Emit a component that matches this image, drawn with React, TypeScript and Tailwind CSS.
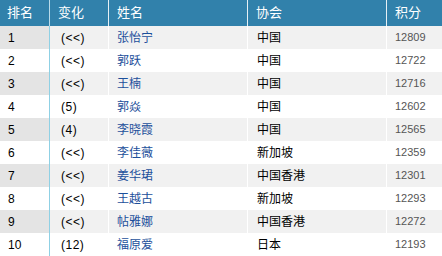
const rows = [
  { rank: "1", change: "(<<)", name: "张怡宁", assoc: "中国", score: "12809" },
  { rank: "2", change: "(<<)", name: "郭跃", assoc: "中国", score: "12722" },
  { rank: "3", change: "(<<)", name: "王楠", assoc: "中国", score: "12716" },
  { rank: "4", change: "(5)", name: "郭焱", assoc: "中国", score: "12602" },
  { rank: "5", change: "(4)", name: "李晓霞", assoc: "中国", score: "12565" },
  { rank: "6", change: "(<<)", name: "李佳薇", assoc: "新加坡", score: "12359" },
  { rank: "7", change: "(<<)", name: "姜华珺", assoc: "中国香港", score: "12301" },
  { rank: "8", change: "(<<)", name: "王越古", assoc: "新加坡", score: "12293" },
  { rank: "9", change: "(<<)", name: "帖雅娜", assoc: "中国香港", score: "12272" },
  { rank: "10", change: "(12)", name: "福原爱", assoc: "日本", score: "12193" },
];

const cjk = "font-['Liberation_Sans','Noto_Sans_CJK_SC',sans-serif]";

export default function App() {
  return (
    <div className={`w-[442px] h-[256px] bg-white ${cjk}`}>
      {/* header */}
      <div className="flex h-[26px] bg-[#3181ab] text-white text-[13px] items-center">
        <div className="w-[50px] h-full flex items-center pl-[7px] border-r border-[#b9dbea]">排名</div>
        <div className="w-[59px] h-full flex items-center pl-[8px] border-r border-[#e6f0f5]">变化</div>
        <div className="w-[139px] h-full flex items-center pl-[8px] border-r border-[#e6f0f5]">姓名</div>
        <div className="w-[139px] h-full flex items-center pl-[8px] border-r border-[#e6f0f5]">协会</div>
        <div className="flex-1 h-full flex items-center pl-[8px]">积分</div>
      </div>

      {rows.map((r, i) => {
        const odd = i % 2 === 0;
        return (
          <div key={r.rank} className={`flex h-[23px] text-[12px] ${odd ? "bg-[#f1f1f1]" : "bg-white"}`}>
            <div className={`w-[50px] flex items-center pl-[8px] text-black border-r border-[#8fd0e4] ${odd ? "bg-[#e4e4e4]" : ""}`}>
              {r.rank}
            </div>
            <div className="w-[59px] flex items-center pl-[11px] text-black tracking-[0.5px] border-r border-white">
              {r.change}
            </div>
            <div className="w-[139px] flex items-center pl-[8px] text-[#1c4f9b] border-r border-white">
              {r.name}
            </div>
            <div className="w-[139px] flex items-center pl-[9px] text-black border-r border-white">
              {r.assoc}
            </div>
            <div className="flex-1 flex items-center pl-[8px] text-[#555555] text-[11px]">
              {r.score}
            </div>
          </div>
        );
      })}
    </div>
  );
}
